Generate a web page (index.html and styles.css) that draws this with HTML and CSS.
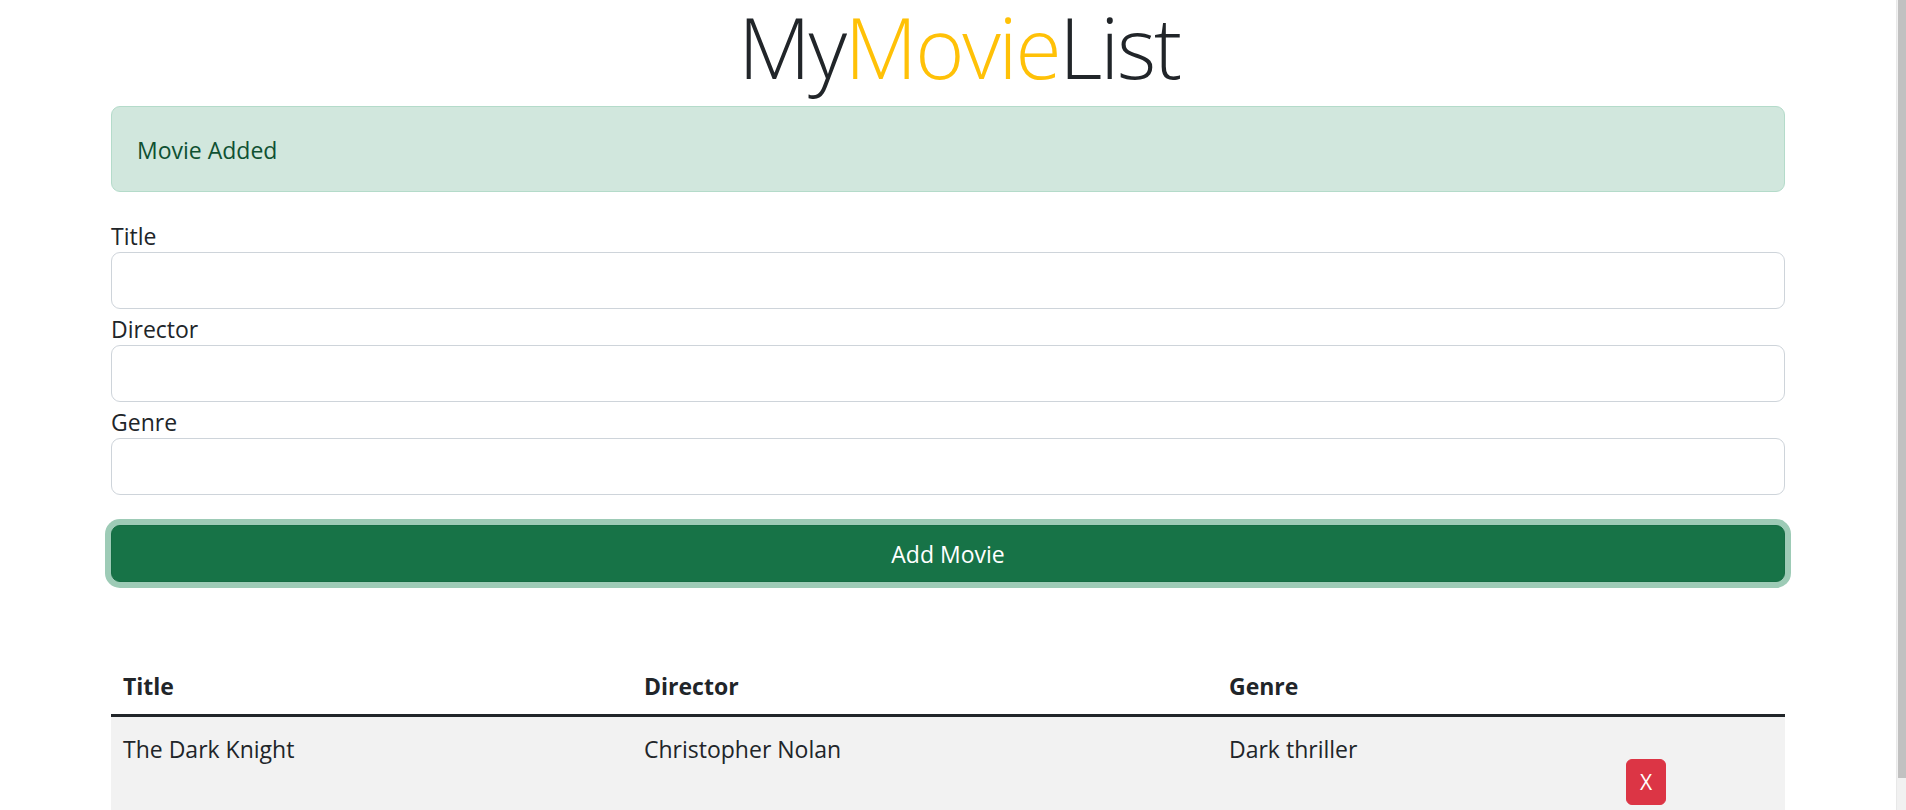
FILE: index.html
```html
<!DOCTYPE html>
<html lang="en">
<head>
<meta charset="utf-8">
<title>MyMovieList</title>
<link rel="stylesheet" href="styles.css">
</head>
<body>
<div class="page">
  <main class="container">
    <h1 class="brand">My<span class="brand-accent">Movie</span>List</h1>
    <div class="alert">Movie Added</div>
    <form class="movie-form">
      <label class="field-label" for="title">Title</label>
      <input class="field-input" id="title" type="text">
      <label class="field-label" for="director">Director</label>
      <input class="field-input" id="director" type="text">
      <label class="field-label" for="genre">Genre</label>
      <input class="field-input" id="genre" type="text">
      <button class="btn-add" type="button">Add Movie</button>
    </form>
    <table class="movie-table">
      <colgroup>
        <col class="col-title">
        <col class="col-director">
        <col class="col-genre">
        <col class="col-action">
      </colgroup>
      <thead>
        <tr><th>Title</th><th>Director</th><th>Genre</th><th></th></tr>
      </thead>
      <tbody>
        <tr>
          <td>The Dark Knight</td>
          <td>Christopher Nolan</td>
          <td>Dark thriller</td>
          <td><button class="btn-delete" type="button">X</button></td>
        </tr>
      </tbody>
    </table>
  </main>
  <div class="scrollbar"><div class="scrollbar-thumb"></div></div>
</div>
</body>
</html>
```
FILE: styles.css
```css
html, body {
  margin: 0;
  padding: 0;
  height: 100%;
  overflow: hidden;
  background: #fff;
}
body {
  font-family: "Open Sans", "Noto Sans", sans-serif;
  font-size: 24px;
  line-height: 36px;
  color: #212529;
}
.page {
  display: flex;
  height: 810px;
}
.container {
  flex: 1;
  box-sizing: border-box;
  padding: 0 111px;
  min-width: 0;
}
.brand {
  margin: 0 0 12px;
  padding-left: 22px;
  text-align: center;
  font-size: 84px;
  line-height: 94px;
  font-weight: 300;
  letter-spacing: -2.2px;
  color: #212529;
}
.brand-accent {
  color: #ffc107;
}
.alert {
  margin: 0 0 24px;
  padding: 25px 25px 23px;
  background: #d1e7dd;
  border: 1px solid #b4dbca;
  border-radius: 9px;
  color: #0f5132;
  font-size: 23px;
}
.movie-form {
  display: flex;
  flex-direction: column;
}
.field-label {
  display: block;
  box-sizing: border-box;
  height: 36px;
  padding-top: 2px;
  font-size: 23px;
  line-height: 36px;
}
.field-input {
  display: block;
  box-sizing: border-box;
  width: 100%;
  height: 57px;
  margin: 0;
  border: 1px solid #ced4da;
  border-radius: 9px;
  background: #fff;
  font: inherit;
}
.btn-add {
  margin-top: 30px;
  height: 57px;
  width: 100%;
  box-sizing: border-box;
  padding-top: 2px;
  border: 1px solid #146c43;
  border-radius: 9px;
  background: #177347;
  color: #fff;
  font-family: inherit;
  font-size: 23px;
  box-shadow: 0 0 0 6px #9dcbb6;
}
.movie-table {
  margin-top: 72px;
  width: 100%;
  border-collapse: collapse;
  table-layout: fixed;
}
.col-title { width: 521px; }
.col-director { width: 585px; }
.col-genre { width: 397px; }
.col-action { width: 171px; }
.movie-table th,
.movie-table td {
  padding: 14px 12px 10px;
  text-align: left;
  vertical-align: top;
  font-size: 23px;
}
.movie-table th {
  font-weight: 700;
  height: 36px;
}
.movie-table thead tr {
  border-bottom: 3px solid #212529;
}
.movie-table tbody tr {
  background: #f2f2f2;
}
.btn-delete {
  display: block;
  margin-top: 28px;
  width: 40px;
  height: 46px;
  padding: 0;
  border: 1px solid #dc3545;
  border-radius: 6px;
  background: #dc3545;
  color: #fff;
  font-family: inherit;
  font-size: 21px;
}
.scrollbar {
  flex: 0 0 10px;
  background: #f1f1f1;
  border-left: 1px solid #e8e8e8;
  box-sizing: border-box;
}
.scrollbar-thumb {
  height: 778px;
  margin-left: 1px;
  background: #c1c1c1;
}
```
